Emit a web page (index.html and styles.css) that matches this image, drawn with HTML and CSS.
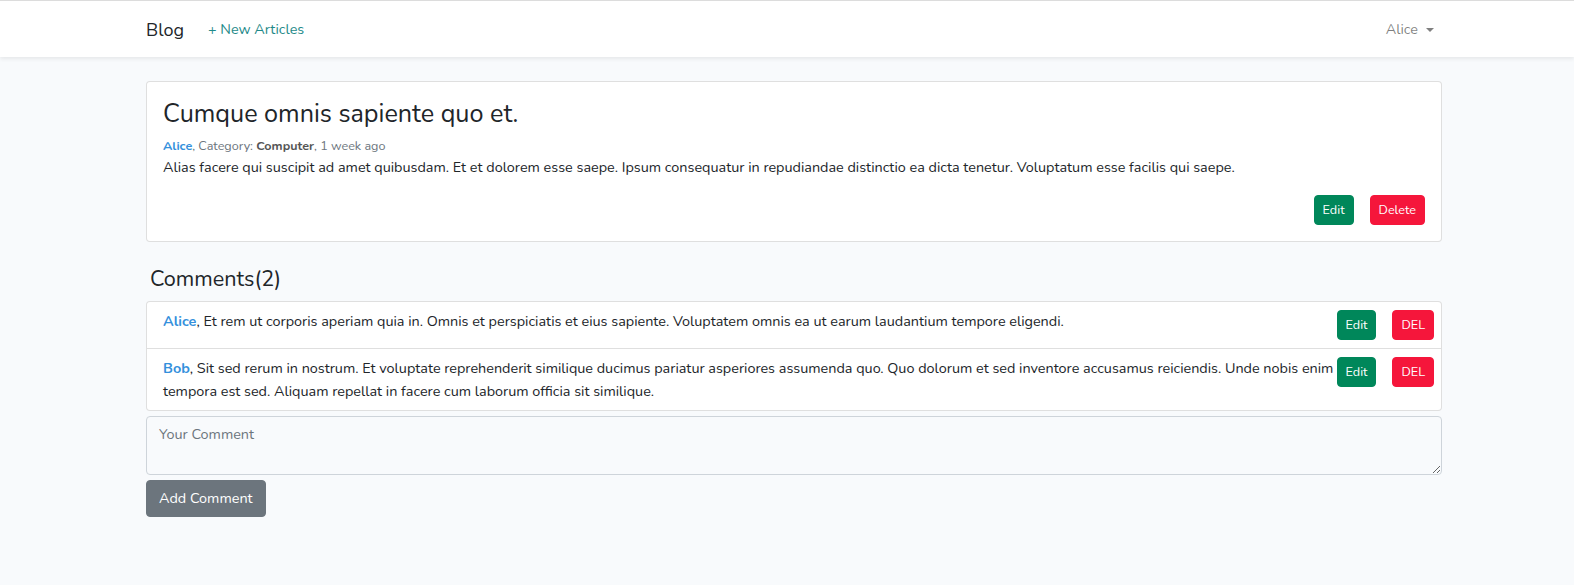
FILE: index.html
```html
<!DOCTYPE html>
<html lang="en">
<head>
<meta charset="utf-8">
<title>Blog</title>
<link rel="stylesheet" href="styles.css">
</head>
<body>
<nav class="navbar">
  <div class="container nav-inner">
    <a class="brand" href="#">Blog</a>
    <a class="nav-link new" href="#">+ New Articles</a>
    <div class="spacer"></div>
    <a class="nav-link user" href="#">Alice <span class="caret"></span></a>
  </div>
</nav>
<main class="container main">
  <div class="card">
    <h3 class="title">Cumque omnis sapiente quo et.</h3>
    <div class="meta"><a class="author" href="#">Alice</a>, Category: <b>Computer</b>, 1 week ago</div>
    <p class="body">Alias facere qui suscipit ad amet quibusdam. Et et dolorem esse saepe. Ipsum consequatur in repudiandae distinctio ea dicta tenetur. Voluptatum esse facilis qui saepe.</p>
    <div class="actions">
      <button class="btn btn-sm btn-green">Edit</button>
      <button class="btn btn-sm btn-red">Delete</button>
    </div>
  </div>
  <h4 class="comments-title">Comments(2)</h4>
  <ul class="comments">
    <li class="comment">
      <div class="comment-text"><a class="author" href="#">Alice</a>, Et rem ut corporis aperiam quia in. Omnis et perspiciatis et eius sapiente. Voluptatem omnis ea ut earum laudantium tempore eligendi.</div>
      <div class="comment-actions">
        <button class="btn btn-sm btn-green">Edit</button>
        <button class="btn btn-sm btn-red">DEL</button>
      </div>
    </li>
    <li class="comment">
      <div class="comment-text"><a class="author" href="#">Bob</a>, Sit sed rerum in nostrum. Et voluptate reprehenderit similique ducimus pariatur asperiores assumenda quo. Quo dolorum et sed inventore accusamus reiciendis. Unde nobis enim tempora est sed. Aliquam repellat in facere cum laborum officia sit similique.</div>
      <div class="comment-actions">
        <button class="btn btn-sm btn-green">Edit</button>
        <button class="btn btn-sm btn-red">DEL</button>
      </div>
    </li>
  </ul>
  <form class="comment-form">
    <textarea class="textarea" placeholder="Your Comment"></textarea>
    <button type="button" class="btn btn-gray">Add Comment</button>
  </form>
</main>
</body>
</html>
```
FILE: styles.css
```css
* { box-sizing: border-box; }
html, body { margin: 0; }
body {
  background: #f8fafc;
  font-family: "Nunito", "Lato", "Open Sans", sans-serif;
  font-size: 14.4px;
  line-height: 1.6;
  color: #212529;
  border-top: 1px solid #dcdcdc;
}
a { text-decoration: none; }
.container {
  width: 1296px;
  margin-left: 146px;
}
.navbar {
  background: #fff;
  height: 56px;
  box-shadow: 0 2px 4px rgba(0,0,0,.075);
}
.nav-inner {
  display: flex;
  align-items: center;
  height: 56px;
  padding-top: 2px;
}
.brand {
  color: #212529;
  font-size: 18px;
  margin-right: 24px;
}
.nav-link { font-size: 14.4px; }
.new { color: #1f8a89; }
.spacer { flex: 1; }
.user { color: rgba(0,0,0,.5); margin-right: 8px; display: flex; align-items: center; }
.caret {
  display: inline-block;
  margin-left: 8px;
  border-top: 4.5px solid rgba(0,0,0,.5);
  border-left: 4px solid transparent;
  border-right: 4px solid transparent;
}
.main { padding-top: 24px; }
.card {
  background: #fff;
  border: 1px solid rgba(0,0,0,.125);
  border-radius: 4px;
  padding: 17px 16px 16px;
}
.title {
  margin: 0 0 7px;
  font-size: 25.2px;
  font-weight: 400;
  line-height: 1.2;
}
.meta { font-size: 12.6px; color: #6c757d; line-height: 1.6; }
.meta b { color: #555; }
.author { color: #3490dc; font-weight: 700; }
.body { margin: 0 0 16px; }
.actions { display: flex; justify-content: flex-end; gap: 16px; }
.btn {
  font-family: inherit;
  border: 1px solid transparent;
  border-radius: 4px;
  color: #fff;
  cursor: pointer;
  line-height: 1.6;
}
.btn-sm { font-size: 12.6px; padding: 4px 8px; line-height: 20px; }
.btn-green { background: #00875a; border-color: #00875a; }
.btn-red { background: #f5163b; border-color: #f5163b; }
.btn-gray { background: #6c757d; border-color: #6c757d; font-size: 14.4px; padding: 6px 12px; }
.comments-title {
  margin: 25px 0 8px 4px;
  font-size: 21.6px;
  font-weight: 400;
  line-height: 1.2;
}
.comments {
  list-style: none;
  margin: 0 0 5px;
  padding: 0;
  background: #fff;
  border: 1px solid rgba(0,0,0,.125);
  border-radius: 4px;
}
.comment {
  display: flex;
  align-items: flex-start;
  padding: 8px 7px 8px 16px;
  border-bottom: 1px solid rgba(0,0,0,.125);
}
.comment:last-child { border-bottom: 0; }
.comment-text { flex: 1; margin-right: -4px; line-height: 22.5px; }
.comment-actions { display: flex; gap: 16px; }
.comment-form { display: flex; flex-direction: column; align-items: flex-start; gap: 5px; }
.textarea {
  display: block;
  width: 100%;
  height: 59px;
  margin: 0;
  background: #f8fafc;
  border: 1px solid #ced4da;
  border-radius: 4px;
  padding: 7px 12px 6px;
  font-family: inherit;
  font-size: 14.4px;
  color: #495057;
}
.textarea::placeholder { color: #6c757d; }
```
